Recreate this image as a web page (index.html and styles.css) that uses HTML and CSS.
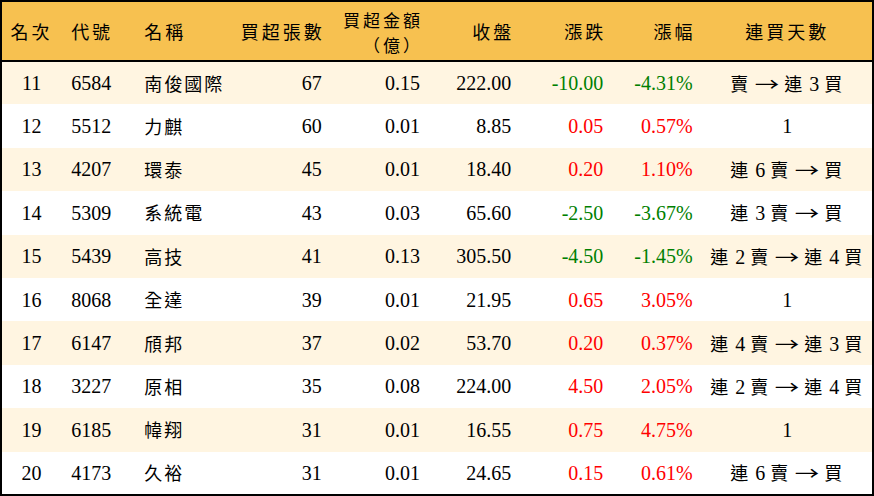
FILE: index.html
```html
<!DOCTYPE html>
<html lang="zh-Hant">
<head>
<meta charset="utf-8">
<title>買超排行</title>
<link rel="stylesheet" href="styles.css">
</head>
<body>
<table class="rank">
  <colgroup>
    <col class="w1"><col class="w2"><col class="w3"><col class="w4"><col class="w5"><col class="w6"><col class="w7"><col class="w8"><col class="w9">
  </colgroup>
  <thead>
    <tr>
      <th class="ctr"><span class="c">名次</span></th>
      <th class="lft"><span class="c">代號</span></th>
      <th class="lft"><span class="c">名稱</span></th>
      <th class="rgt"><span class="c">買超張數</span></th>
      <th class="rgt two"><span class="c ln">買超金額</span><span class="c ln">（億）</span></th>
      <th class="rgt"><span class="c">收盤</span></th>
      <th class="rgt"><span class="c">漲跌</span></th>
      <th class="rgt"><span class="c">漲幅</span></th>
      <th class="ctr"><span class="c">連買天數</span></th>
    </tr>
  </thead>
  <tbody>
    <tr class="odd"><td class="ctr">11</td><td class="lft">6584</td><td class="lft"><span class="c">南俊國際</span></td><td class="rgt">67</td><td class="rgt">0.15</td><td class="rgt">222.00</td><td class="rgt dn">-10.00</td><td class="rgt dn">-4.31%</td><td class="ctr"><span class="c">賣</span> <span class="ar">→</span> <span class="c">連</span> 3 <span class="c">買</span></td></tr>
    <tr><td class="ctr">12</td><td class="lft">5512</td><td class="lft"><span class="c">力麒</span></td><td class="rgt">60</td><td class="rgt">0.01</td><td class="rgt">8.85</td><td class="rgt up">0.05</td><td class="rgt up">0.57%</td><td class="ctr">1</td></tr>
    <tr class="odd"><td class="ctr">13</td><td class="lft">4207</td><td class="lft"><span class="c">環泰</span></td><td class="rgt">45</td><td class="rgt">0.01</td><td class="rgt">18.40</td><td class="rgt up">0.20</td><td class="rgt up">1.10%</td><td class="ctr"><span class="c">連</span> 6 <span class="c">賣</span> <span class="ar">→</span> <span class="c">買</span></td></tr>
    <tr><td class="ctr">14</td><td class="lft">5309</td><td class="lft"><span class="c">系統電</span></td><td class="rgt">43</td><td class="rgt">0.03</td><td class="rgt">65.60</td><td class="rgt dn">-2.50</td><td class="rgt dn">-3.67%</td><td class="ctr"><span class="c">連</span> 3 <span class="c">賣</span> <span class="ar">→</span> <span class="c">買</span></td></tr>
    <tr class="odd"><td class="ctr">15</td><td class="lft">5439</td><td class="lft"><span class="c">高技</span></td><td class="rgt">41</td><td class="rgt">0.13</td><td class="rgt">305.50</td><td class="rgt dn">-4.50</td><td class="rgt dn">-1.45%</td><td class="ctr"><span class="c">連</span> 2 <span class="c">賣</span> <span class="ar">→</span> <span class="c">連</span> 4 <span class="c">買</span></td></tr>
    <tr><td class="ctr">16</td><td class="lft">8068</td><td class="lft"><span class="c">全達</span></td><td class="rgt">39</td><td class="rgt">0.01</td><td class="rgt">21.95</td><td class="rgt up">0.65</td><td class="rgt up">3.05%</td><td class="ctr">1</td></tr>
    <tr class="odd"><td class="ctr">17</td><td class="lft">6147</td><td class="lft"><span class="c">頎邦</span></td><td class="rgt">37</td><td class="rgt">0.02</td><td class="rgt">53.70</td><td class="rgt up">0.20</td><td class="rgt up">0.37%</td><td class="ctr"><span class="c">連</span> 4 <span class="c">賣</span> <span class="ar">→</span> <span class="c">連</span> 3 <span class="c">買</span></td></tr>
    <tr><td class="ctr">18</td><td class="lft">3227</td><td class="lft"><span class="c">原相</span></td><td class="rgt">35</td><td class="rgt">0.08</td><td class="rgt">224.00</td><td class="rgt up">4.50</td><td class="rgt up">2.05%</td><td class="ctr"><span class="c">連</span> 2 <span class="c">賣</span> <span class="ar">→</span> <span class="c">連</span> 4 <span class="c">買</span></td></tr>
    <tr class="odd"><td class="ctr">19</td><td class="lft">6185</td><td class="lft"><span class="c">幃翔</span></td><td class="rgt">31</td><td class="rgt">0.01</td><td class="rgt">16.55</td><td class="rgt up">0.75</td><td class="rgt up">4.75%</td><td class="ctr">1</td></tr>
    <tr><td class="ctr">20</td><td class="lft">4173</td><td class="lft"><span class="c">久裕</span></td><td class="rgt">31</td><td class="rgt">0.01</td><td class="rgt">24.65</td><td class="rgt up">0.15</td><td class="rgt up">0.61%</td><td class="ctr"><span class="c">連</span> 6 <span class="c">賣</span> <span class="ar">→</span> <span class="c">買</span></td></tr>
  </tbody>
</table>
</body>
</html>
```

FILE: styles.css
```css
html, body {
  margin: 0;
  padding: 0;
  background: #ffffff;
}

.rank {
  width: 874px;
  height: 496px;
  border-collapse: collapse;
  table-layout: fixed;
  border: 2px solid #000;
  font-family: "Liberation Serif", "Noto Sans CJK TC", serif;
  font-size: 20px;
  color: #000;
}

.w1 { width: 60px; }
.w2 { width: 73px; }
.w3 { width: 95px; }
.w4 { width: 102px; }
.w5 { width: 98px; }
.w6 { width: 91px; }
.w7 { width: 92px; }
.w8 { width: 89px; }
.w9 { width: 170px; }

.rank thead tr {
  background: #f7c150;
  height: 60px;
  border-bottom: 2px solid #000;
}

.rank th {
  font-weight: normal;
  padding: 0;
  line-height: 22px;
  vertical-align: middle;
}

.rank th.two {
  padding-top: 1px;
}

.rank th .ln {
  display: block;
  font-size: 17px;
  line-height: 25px;
  height: 25px;
}

.rank tbody tr {
  height: 43px;
  background: #ffffff;
}

.rank tbody tr.odd {
  background: #fff5e1;
}

.rank td {
  padding: 0;
  line-height: 24px;
  vertical-align: middle;
  white-space: nowrap;
}

.c {
  font-family: "Noto Sans CJK TC", sans-serif;
  font-size: 18px;
  letter-spacing: 2px;
}

.ar {
  font-family: "Noto Sans CJK TC", sans-serif;
  font-size: 18px;
  display: inline-block;
  transform: scaleX(1.35);
  margin: 0 3px;
}

.rank th .c {
  letter-spacing: 3px;
}

.ctr { text-align: center; }
.lft { text-align: left; padding-left: 10px !important; }
.rgt { text-align: right; padding-right: 10px !important; }
.rank th.rgt .c { margin-right: -3px; }

.up { color: #ff0000; }
.dn { color: #008000; }
```
